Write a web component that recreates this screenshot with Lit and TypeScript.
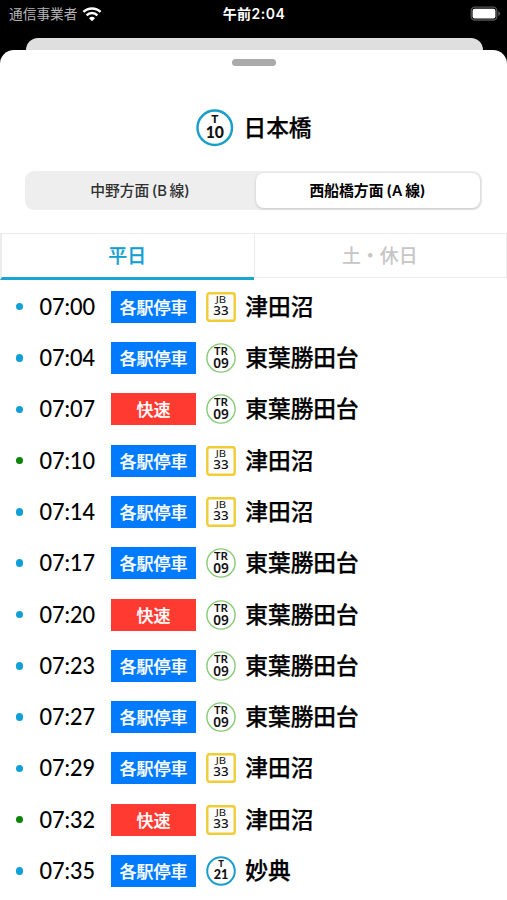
import { LitElement, html, css, svg } from "lit";
import { customElement, property } from "lit/decorators.js";
import { classMap } from "lit/directives/class-map.js";

type Line = "T" | "JB" | "TR";

interface Train {
  time: string;
  rapid?: boolean;
  origin?: boolean;
  line: Line;
  num: string;
  dest: string;
}

const tsudanuma = { line: "JB" as Line, num: "33", dest: "津田沼" };
const katsutadai = { line: "TR" as Line, num: "09", dest: "東葉勝田台" };

const TRAINS: Train[] = [
  { time: "07:00", ...tsudanuma },
  { time: "07:04", ...katsutadai },
  { time: "07:07", rapid: true, ...katsutadai },
  { time: "07:10", origin: true, ...tsudanuma },
  { time: "07:14", ...tsudanuma },
  { time: "07:17", ...katsutadai },
  { time: "07:20", rapid: true, ...katsutadai },
  { time: "07:23", ...katsutadai },
  { time: "07:27", ...katsutadai },
  { time: "07:29", ...tsudanuma },
  { time: "07:32", rapid: true, origin: true, ...tsudanuma },
  { time: "07:35", line: "T", num: "21", dest: "妙典" },
];

@customElement("station-mark")
export class StationMark extends LitElement {
  @property() line: Line = "T";
  @property() num = "";

  static styles = css`
    :host { display: block; }
    svg { display: block; width: 100%; height: 100%; }
    text { text-anchor: middle; fill: #111; }
    .metro { font-family: Lato, sans-serif; font-weight: 900; }
    .jr, .toyo { font-family: "Noto Sans", sans-serif; font-weight: 500; }
    .jr-line { font-weight: 400; }
    .toyo { font-weight: 600; }
  `;

  render() {
    const n = this.num;
    const mark = {
      T: svg`
        <circle cx="15" cy="15" r="13.8" fill="#fff" stroke="#1a9fcb" stroke-width="2"/>
        <text class="metro" x="15" y="10.8" font-size="9.4">T</text>
        <text class="metro" x="15" y="22.9" font-size="13.8" textLength="14.6" lengthAdjust="spacingAndGlyphs">${n}</text>`,
      JB: svg`
        <rect x="1.3" y="1.3" width="27.4" height="27.4" rx="2" fill="#fff" stroke="#f0cd35" stroke-width="2.4"/>
        <text class="jr jr-line" x="15" y="11.3" font-size="9.4" textLength="10.4" lengthAdjust="spacingAndGlyphs">JB</text>
        <text class="jr" x="15" y="22.8" font-size="13" textLength="15.4" lengthAdjust="spacingAndGlyphs">${n}</text>`,
      TR: svg`
        <circle cx="15" cy="15" r="14.1" fill="#fff" stroke="#86cb75" stroke-width="1.4"/>
        <text class="toyo" x="15" y="12.4" font-size="11" textLength="14" lengthAdjust="spacingAndGlyphs">TR</text>
        <text class="toyo" x="15" y="24.6" font-size="13.4" textLength="15.6" lengthAdjust="spacingAndGlyphs">${n}</text>`,
    }[this.line];
    return html`<svg viewBox="0 0 30 30">${mark}</svg>`;
  }
}

@customElement("app-root")
export class AppRoot extends LitElement {
  static styles = css`
    :host {
      display: block;
      height: 900px;
      overflow: hidden;
      background: #000;
      color: #000;
      font-family: "Liberation Sans", "Noto Sans CJK JP", sans-serif;
    }
    * { box-sizing: border-box; }
    .status {
      height: 38px;
      display: grid;
      grid-template-columns: 1fr auto 1fr;
      align-items: center;
      padding: 0 6px 11px 9px;
      font: 13.7px/27px "Noto Sans CJK JP", sans-serif;
      color: #fff;
    }
    .carrier { display: flex; align-items: center; gap: 5px; color: #b4b4b4; }
    .clock { font-family: Inter, "Noto Sans CJK JP", sans-serif; font-weight: 600; font-size: 14px; letter-spacing: 0.5px; margin-right: 2px; }
    .battery { justify-self: end; display: block; }
    .wifi { display: block; }
    .behind { height: 12px; margin: 0 24.5px 0 25.5px; border-radius: 12px 12px 0 0; background: #dfdfdf; }
    .sheet { height: 850px; border-radius: 14px 14px 0 0; background: #fff; padding-top: 9px; }
    .grabber { width: 44px; height: 7px; margin: 0 auto; border-radius: 4px; background: #aaa; }
    .station { display: flex; align-items: center; height: 38px; margin: 43px 0 0 196px; gap: 10px; }
    .station station-mark { width: 37.5px; height: 37.5px; }
    .name, .dest {
      font: 500 22.7px/34px "Noto Sans CJK JP", sans-serif;
      -webkit-text-stroke: 0.25px #000;
      white-space: nowrap;
      padding-bottom: 2px;
    }
    .segments { display: flex; width: 457px; height: 39px; margin: 24px 0 0 25px; padding: 2px; border-radius: 9px; background: #eee; }
    .segment {
      flex: 1;
      display: flex; align-items: center; justify-content: center;
      font: 500 14.8px/22px Inter, "Noto Sans CJK JP", sans-serif;
      word-spacing: -1.5px;
      color: #303030;
      padding-right: 3px;
      border-radius: 8px;
    }
    .segment.on { background: #fff; font-weight: 600; color: #000; box-shadow: 0 1px 3px rgba(0, 0, 0, 0.18); flex: none; width: 224px; padding-right: 1px; word-spacing: -1px; }
    .jp { font-family: "Noto Sans CJK JP", sans-serif; }
    .tabs { display: flex; height: 47px; margin-top: 23px; }
    .tab {
      flex: 1;
      display: flex; align-items: center; justify-content: center;
      border: 1px solid #ececec;
      font: 500 18.9px/28px "Noto Sans CJK JP", sans-serif;
      color: #c6c6c6;
      height: 45px;
      padding: 0 1px 2px 0;
    }
    .tab.on {
      color: #139fd2;
      height: 47px;
      border-bottom: 3px solid #1ba5d2;
      border-right: 0;
      border-left-width: 2px;
      -webkit-text-stroke: 0.25px #139fd2;
    }
    .row {
      display: grid;
      grid-template-columns: 24px 71px 85.5px 9.5px 30px 1fr;
      align-items: center;
      height: 51.3px;
      padding-left: 15.7px;
    }
    .list { padding-top: 1.1px; }
    .dot { width: 7.5px; height: 7.5px; border-radius: 50%; background: #109fd6; }
    .dot.origin { background: #088408; }
    .time { display: block; width: 57px; height: 30px; overflow: visible; }
    .time text { font-family: Lato, sans-serif; font-weight: 500; font-size: 22.8px; }
    .kind {
      height: 32px;
      background: #007aff;
      color: #fff;
      text-align: center;
      font: 500 17px/31px "Noto Sans CJK JP", sans-serif;
      -webkit-text-stroke: 0.2px #fff;
    }
    .kind.rapid { background: #ff3a30; }
    .row station-mark { grid-column: 5; width: 30px; height: 30px; }
    .dest { padding-left: 9.6px; }
  `;

  private row(t: Train) {
    return html`
      <div class="row">
        <span class=${classMap({ dot: true, origin: !!t.origin })}></span>
        <svg class="time" viewBox="0 0 57 30">
          <text x="-0.6" y="23.2" textLength="55.8" lengthAdjust="spacingAndGlyphs">${t.time}</text>
        </svg>
        <span class=${classMap({ kind: true, rapid: !!t.rapid })}>${t.rapid ? "快速" : "各駅停車"}</span>
        <station-mark .line=${t.line} .num=${t.num}></station-mark>
        <span class="dest">${t.dest}</span>
      </div>`;
  }

  render() {
    return html`
      <div class="status">
        <span class="carrier">通信事業者
          <svg class="wifi" width="20" height="16" viewBox="0 0 20 16">
            <g fill="none" stroke="#fff" stroke-width="2.5">
              <path d="M1.4 5.9a12.4 12.4 0 0 1 17.2 0"/>
              <path d="M4.6 9.3a7.7 7.7 0 0 1 10.8 0"/>
            </g>
            <path d="M10 15.2 7 12.2a4.3 4.3 0 0 1 6 0z" fill="#fff"/>
          </svg>
        </span>
        <span class="clock">午前2:04</span>
        <svg class="battery" width="31" height="16" viewBox="0 0 31 16">
          <rect x="1.2" y="1.2" width="25.6" height="12.8" rx="3.6" fill="none" stroke="#565656" stroke-width="1.3"/>
          <rect x="2.6" y="2.8" width="22.8" height="9.8" rx="2" fill="#fff"/>
          <path d="M28.2 5.2q2 .7 2 2.4t-2 2.4z" fill="#565656"/>
        </svg>
      </div>
      <div class="behind"></div>
      <div class="sheet">
        <div class="grabber"></div>
        <div class="station">
          <station-mark .line=${"T"} .num=${"10"}></station-mark>
          <span class="name">日本橋</span>
        </div>
        <div class="segments">
          <div class="segment"><span><span class="jp">中野方面</span> (B <span class="jp">線</span>)</span></div>
          <div class="segment on"><span><span class="jp">西船橋方面</span> (A <span class="jp">線</span>)</span></div>
        </div>
        <div class="tabs">
          <div class="tab on">平日</div>
          <div class="tab">土・休日</div>
        </div>
        <div class="list">${TRAINS.map((t) => this.row(t))}</div>
      </div>`;
  }
}
